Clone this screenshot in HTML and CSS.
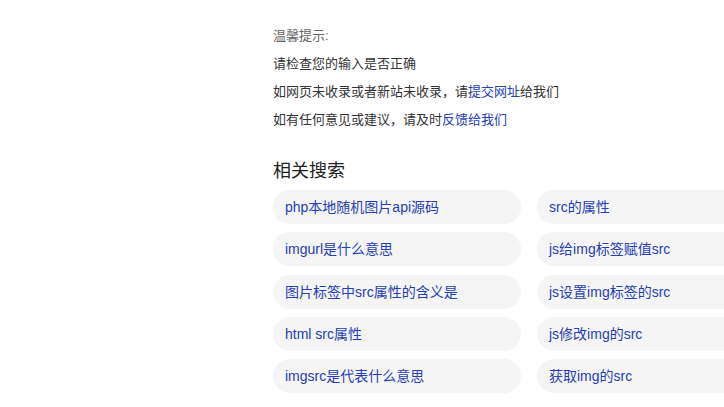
FILE: index.html
```html
<!DOCTYPE html>
<html lang="zh-CN">
<head>
<meta charset="utf-8">
<title>搜索结果</title>
<link rel="stylesheet" href="styles.css">
</head>
<body>
<div class="page">
  <div class="tips">
    <p class="tip-title">温馨提示:</p>
    <p>请检查您的输入是否正确</p>
    <p>如网页未收录或者新站未收录，请<a href="#">提交网址</a>给我们</p>
    <p>如有任何意见或建议，请及时<a href="#">反馈给我们</a></p>
  </div>
  <h2 class="rel-title">相关搜索</h2>
  <div class="rel-grid">
    <a class="pill" href="#">php本地随机图片api源码</a>
    <a class="pill" href="#">src的属性</a>
    <a class="pill" href="#">imgurl是什么意思</a>
    <a class="pill" href="#">js给img标签赋值src</a>
    <a class="pill" href="#">图片标签中src属性的含义是</a>
    <a class="pill" href="#">js设置img标签的src</a>
    <a class="pill" href="#">html src属性</a>
    <a class="pill" href="#">js修改img的src</a>
    <a class="pill" href="#">imgsrc是代表什么意思</a>
    <a class="pill" href="#">获取img的src</a>
  </div>
</div>
</body>
</html>
```
FILE: styles.css
```css
html, body {
  margin: 0;
  padding: 0;
  background: #fff;
  overflow: hidden;
}
body {
  font-family: "Liberation Sans", Arial, "Noto Sans CJK SC", sans-serif;
  color: #333;
}
.page {
  padding: 22px 0 0 273px;
  width: 724px;
  box-sizing: border-box;
  overflow: hidden;
}
.tips p {
  margin: 0;
  font-size: 13px;
  line-height: 28px;
  color: #333;
}
.tips .tip-title {
  color: #666;
}
.tips a {
  color: #2440b3;
  text-decoration: none;
}
.rel-title {
  margin: 25px 0 7px;
  font-size: 18px;
  line-height: 24px;
  font-weight: normal;
  color: #222;
}
.rel-grid {
  display: grid;
  grid-template-columns: 248px 248px;
  column-gap: 16px;
  row-gap: 8.3px;
  width: 512px;
}
.pill {
  display: block;
  height: 34px;
  line-height: 34px;
  padding: 0 12px;
  border-radius: 17px;
  background: #f5f5f6;
  color: #2440b3;
  font-size: 14px;
  text-decoration: none;
  white-space: nowrap;
}
```
